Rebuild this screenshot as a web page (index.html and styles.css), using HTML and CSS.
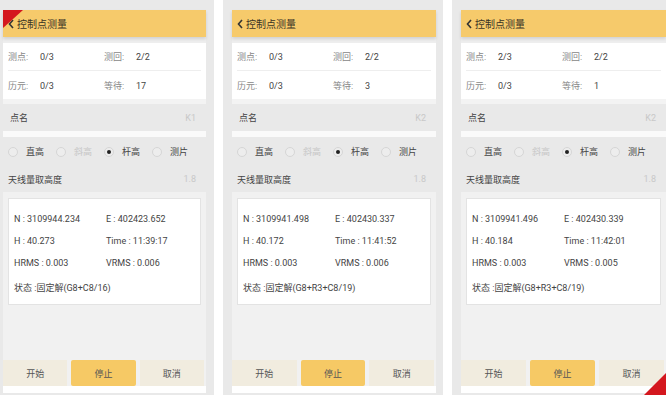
FILE: index.html
```html
<!DOCTYPE html>
<html lang="zh">

<head>
    <meta charset="UTF-8">
    <title>控制点测量</title>
    <link rel="stylesheet" href="styles.css">
</head>

<body>
    <div class="phone p1">
        <span class="corner corner-tl"></span>
        <div class="screen">
            <div class="bar">
                <svg class="back" width="6" height="10" viewBox="0 0 6 10"><path d="M5 1 L1.5 5 L5 9" fill="none" stroke="#333" stroke-width="1.6"/></svg>
                <span>控制点测量</span>
            </div>
            <div class="stats">
                <div class="stat-row">
                    <div class="cell"><span class="lbl">测点:</span><span class="val">0/3</span></div>
                    <div class="cell"><span class="lbl">测回:</span><span class="val">2/2</span></div>
                </div>
                <div class="stat-row">
                    <div class="cell"><span class="lbl">历元:</span><span class="val">0/3</span></div>
                    <div class="cell"><span class="lbl">等待:</span><span class="val">17</span></div>
                </div>
            </div>
            <div class="gap"></div>
            <div class="field-row"><span>点名</span><span class="hint">K1</span></div>
            <div class="white-line"></div>
            <div class="radio-row">
                <div class="radio"><i></i><span>直高</span></div>
                <div class="radio off"><i></i><span>斜高</span></div>
                <div class="radio on"><i></i><span>杆高</span></div>
                <div class="radio"><i></i><span>测片</span></div>
            </div>
            <div class="field-row ant"><span>天线量取高度</span><span class="hint">1.8</span></div>
            <div class="content">
                <div class="card">
                    <div class="line"><span>N : 3109944.234</span><span>E : 402423.652</span></div>
                    <div class="line"><span>H : 40.273</span><span>Time : 11:39:17</span></div>
                    <div class="line"><span>HRMS : 0.003</span><span>VRMS : 0.006</span></div>
                    <div class="state">状态 :固定解(G8+C8/16)</div>
                </div>
            </div>
            <div class="btns">
                <div class="btn">开始</div>
                <div class="btn stop">停止</div>
                <div class="btn">取消</div>
            </div>
            <div class="foot"></div>
        </div>
    </div>

    <div class="phone p2">
        <div class="screen">
            <div class="bar">
                <svg class="back" width="6" height="10" viewBox="0 0 6 10"><path d="M5 1 L1.5 5 L5 9" fill="none" stroke="#333" stroke-width="1.6"/></svg>
                <span>控制点测量</span>
            </div>
            <div class="stats">
                <div class="stat-row">
                    <div class="cell"><span class="lbl">测点:</span><span class="val">0/3</span></div>
                    <div class="cell"><span class="lbl">测回:</span><span class="val">2/2</span></div>
                </div>
                <div class="stat-row">
                    <div class="cell"><span class="lbl">历元:</span><span class="val">0/3</span></div>
                    <div class="cell"><span class="lbl">等待:</span><span class="val">3</span></div>
                </div>
            </div>
            <div class="gap"></div>
            <div class="field-row"><span>点名</span><span class="hint">K2</span></div>
            <div class="white-line"></div>
            <div class="radio-row">
                <div class="radio"><i></i><span>直高</span></div>
                <div class="radio off"><i></i><span>斜高</span></div>
                <div class="radio on"><i></i><span>杆高</span></div>
                <div class="radio"><i></i><span>测片</span></div>
            </div>
            <div class="field-row ant"><span>天线量取高度</span><span class="hint">1.8</span></div>
            <div class="content">
                <div class="card">
                    <div class="line"><span>N : 3109941.498</span><span>E : 402430.337</span></div>
                    <div class="line"><span>H : 40.172</span><span>Time : 11:41:52</span></div>
                    <div class="line"><span>HRMS : 0.003</span><span>VRMS : 0.006</span></div>
                    <div class="state">状态 :固定解(G8+R3+C8/19)</div>
                </div>
            </div>
            <div class="btns">
                <div class="btn">开始</div>
                <div class="btn stop">停止</div>
                <div class="btn">取消</div>
            </div>
            <div class="foot"></div>
        </div>
    </div>

    <div class="phone p3">
        <span class="corner corner-br"></span>
        <div class="screen">
            <div class="bar">
                <svg class="back" width="6" height="10" viewBox="0 0 6 10"><path d="M5 1 L1.5 5 L5 9" fill="none" stroke="#333" stroke-width="1.6"/></svg>
                <span>控制点测量</span>
            </div>
            <div class="stats">
                <div class="stat-row">
                    <div class="cell"><span class="lbl">测点:</span><span class="val">2/3</span></div>
                    <div class="cell"><span class="lbl">测回:</span><span class="val">2/2</span></div>
                </div>
                <div class="stat-row">
                    <div class="cell"><span class="lbl">历元:</span><span class="val">0/3</span></div>
                    <div class="cell"><span class="lbl">等待:</span><span class="val">1</span></div>
                </div>
            </div>
            <div class="gap"></div>
            <div class="field-row"><span>点名</span><span class="hint">K2</span></div>
            <div class="white-line"></div>
            <div class="radio-row">
                <div class="radio"><i></i><span>直高</span></div>
                <div class="radio off"><i></i><span>斜高</span></div>
                <div class="radio on"><i></i><span>杆高</span></div>
                <div class="radio"><i></i><span>测片</span></div>
            </div>
            <div class="field-row ant"><span>天线量取高度</span><span class="hint">1.8</span></div>
            <div class="content">
                <div class="card">
                    <div class="line"><span>N : 3109941.496</span><span>E : 402430.339</span></div>
                    <div class="line"><span>H : 40.184</span><span>Time : 11:42:01</span></div>
                    <div class="line"><span>HRMS : 0.003</span><span>VRMS : 0.005</span></div>
                    <div class="state">状态 :固定解(G8+R3+C8/19)</div>
                </div>
            </div>
            <div class="btns">
                <div class="btn">开始</div>
                <div class="btn stop">停止</div>
                <div class="btn">取消</div>
            </div>
            <div class="foot"></div>
        </div>
    </div>
</body>

</html>
```

FILE: styles.css
```css
body {
    margin: 0;
    background-color: #fff;
    font-family: Roboto, "Noto Sans CJK SC", sans-serif;
    display: flex;
    gap: 9px;
    height: 395px;
    overflow: hidden;
}

.phone {
    position: relative;
    box-sizing: border-box;
    height: 395px;
    padding-top: 10px;
    padding-bottom: 2px;
    background-color: #e9e9e9;
    flex-shrink: 0;
    overflow: hidden;
}

.p1 {
    width: 214px;
    padding-left: 3px;
    padding-right: 8px;
}

.p2 {
    width: 220px;
    padding-left: 9px;
    padding-right: 7px;
}

.p3 {
    width: 214px;
    padding-left: 9px;
}

.screen {
    height: 100%;
    display: flex;
    flex-direction: column;
    background-color: #eeeeee;
}

.bar {
    height: 27px;
    flex-shrink: 0;
    display: flex;
    align-items: center;
    gap: 3px;
    padding-left: 5px;
    background-color: #f6ca6b;
    box-shadow: 0 2px 3px rgba(0, 0, 0, 0.12);
    font-size: 10px;
    color: #3a3326;
}

.stats {
    margin-top: 6px;
    padding: 0 5px;
    background-color: #fff;
}

.stat-row {
    height: 28px;
    display: flex;
    align-items: center;
    font-size: 9px;
}

.stat-row:first-child {
    border-bottom: 1px solid #eee;
    height: 27px;
}

.cell {
    width: 96px;
}

.lbl {
    display: inline-block;
    width: 32px;
    color: #888;
}

.val {
    color: #444;
}

.gap {
    height: 5px;
    background-color: #f3f3f3;
}

.field-row {
    height: 27px;
    flex-shrink: 0;
    display: flex;
    align-items: center;
    justify-content: space-between;
    padding: 0 10px 0 7px;
    background-color: #e9e9e9;
    font-size: 9px;
    color: #444;
}

.field-row.ant {
    height: 26px;
    padding-left: 5px;
}

.hint {
    color: #c8c8c8;
}

.white-line {
    height: 6px;
    background-color: #fafafa;
}

.radio-row {
    height: 29px;
    flex-shrink: 0;
    display: flex;
    align-items: center;
    padding-left: 5px;
    background-color: #e9e9e9;
    font-size: 9px;
    color: #444;
}

.radio {
    width: 48px;
    display: flex;
    align-items: center;
}

.radio i {
    width: 8px;
    height: 8px;
    border: 1px solid #d6d6d6;
    border-radius: 50%;
    margin-right: 8px;
    position: relative;
    background-color: #ededed;
}

.radio.off span {
    color: #c6c6c6;
}

.radio.on i::after {
    content: "";
    position: absolute;
    left: 2px;
    top: 2px;
    width: 4px;
    height: 4px;
    border-radius: 50%;
    background-color: #222;
}

.content {
    flex: 1;
    padding: 6px 5px 0;
    background-color: #f1f1f1;
}

.card {
    height: 91px;
    padding: 9px 5px 5px;
    background-color: #fff;
    border: 1px solid #e3e3e3;
    font-size: 9px;
    color: #444;
}

.line {
    display: flex;
    height: 22px;
    align-items: center;
}

.line span:first-child {
    width: 92px;
}

.state {
    height: 26px;
    line-height: 28px;
}

.btns {
    height: 26px;
    flex-shrink: 0;
    display: flex;
    gap: 4px;
    padding-right: 2px;
    background-color: #f1f1f1;
}

.btn {
    flex: 1;
    display: flex;
    align-items: center;
    justify-content: center;
    background-color: #f1ecdf;
    font-size: 9px;
    color: #555;
}

.btn.stop {
    background-color: #f6c965;
    border-radius: 2px;
}

.foot {
    height: 7px;
    background-color: #fff;
}

.corner {
    position: absolute;
    z-index: 2;
    width: 0;
    height: 0;
}

.corner-tl {
    left: 3px;
    top: 10px;
    border-top: 18px solid #d4171e;
    border-right: 20px solid transparent;
}

.corner-br {
    right: 0;
    bottom: 0;
    border-bottom: 22px solid #d4171e;
    border-left: 22px solid transparent;
}
```
